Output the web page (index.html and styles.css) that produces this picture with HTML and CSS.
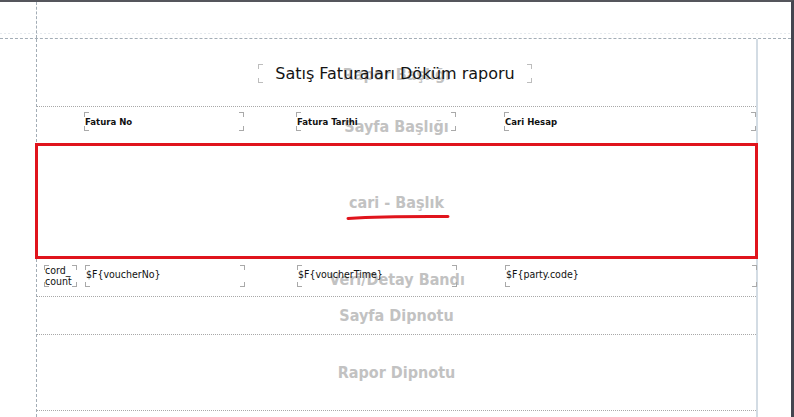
FILE: index.html
```html
<!DOCTYPE html>
<html lang="tr">
<head>
    <meta charset="UTF-8">
    <title>Rapor Tasarımı</title>
    <link rel="stylesheet" href="styles.css">
</head>
<body>
    <div class="sheet">
        <div class="top-margin">
            <div class="gutter"></div>
            <div class="top-rest"></div>
        </div>
        <div class="sheet-body">
            <div class="gutter"></div>
            <div class="page">
                <div class="band title-band">
                    <div class="ghost">Rapor Başlığı</div>
                    <div class="row">
                        <div class="field title-field">Satış Faturaları Döküm raporu</div>
                    </div>
                </div>
                <div class="band head-band">
                    <div class="ghost">Sayfa Başlığı</div>
                    <div class="row cols">
                        <div class="field col-a">Fatura No</div>
                        <div class="field col-b">Fatura Tarihi</div>
                        <div class="field col-c">Cari Hesap</div>
                    </div>
                </div>
                <div class="band group-band">
                    <div class="ghost">
                        <span class="marked">cari - Başlık
                            <svg class="scribble" width="104" height="8" viewBox="0 0 104 8">
                                <path d="M2 5.5 Q 40 3.2 102 3.6" fill="none" stroke="#e0141c" stroke-width="3" stroke-linecap="round"/>
                            </svg>
                        </span>
                    </div>
                </div>
                <div class="band detail-band">
                    <div class="ghost">Veri/Detay Bandı</div>
                    <div class="row details">
                        <div class="field rec">cord_<br>count</div>
                        <div class="field col-a">$F{voucherNo}</div>
                        <div class="field col-b">$F{voucherTime}</div>
                        <div class="field col-c">$F{party.code}</div>
                    </div>
                </div>
                <div class="band foot-band">
                    <div class="ghost">Sayfa Dipnotu</div>
                </div>
                <div class="band summary-band">
                    <div class="ghost">Rapor Dipnotu</div>
                </div>
            </div>
        </div>
    </div>
</body>
</html>
```

FILE: styles.css
```css
body {
    margin: 0;
    background: #ffffff;
    font-family: "DejaVu Sans", Verdana, sans-serif;
}
.sheet {
    width: 791px;
    height: 415px;
    border-top: 2px solid #55565c;
    border-right: 3px solid #44454f;
    overflow: hidden;
}
.top-margin {
    display: flex;
    height: 36px;
    border-bottom: 1px dashed #a3adb6;
    background: linear-gradient(90deg, #e6eaee 50%, transparent 50%) left 31px / 4px 1px repeat-x;
}
.gutter {
    width: 36px;
    flex: none;
}
.top-rest {
    flex: 1;
    border-left: 1px dashed #a3adb6;
}
.sheet-body {
    display: flex;
    height: 378px;
}
.page {
    width: 719px;
    border-left: 1px dashed #a3adb6;
    border-right: 2px solid #d3dce4;
}

/* bands */
.band {
    display: grid;
    border-bottom: 1px dotted #a8a8a8;
}
.band > * {
    grid-area: 1 / 1;
}
.ghost {
    align-self: center;
    justify-self: center;
    font-family: "DejaVu Sans Condensed", "DejaVu Sans", sans-serif;
    font-weight: bold;
    font-size: 16px;
    color: #c2c2c2;
}
.row {
    display: flex;
    align-self: start;
}
.title-band {
    height: 67px;
}
.title-band .ghost {
    margin-top: 4px;
}
.head-band {
    height: 36px;
    border-bottom: none;
}
.head-band .ghost {
    margin-top: 2px;
}
.group-band {
    height: 110px;
    margin: 0 -2px;
    border: 3px solid #e0141c;
}
.group-band .ghost {
    margin-top: 2px;
}
.detail-band {
    height: 37px;
}
.detail-band .ghost {
    margin-top: 3px;
}
.foot-band {
    height: 37px;
}
.summary-band {
    height: 75px;
}

/* elements with corner marks */
.field {
    --c: #a9a9a9;
    box-sizing: border-box;
    background:
        linear-gradient(var(--c), var(--c)) left top / 5px 1px no-repeat,
        linear-gradient(var(--c), var(--c)) left top / 1px 5px no-repeat,
        linear-gradient(var(--c), var(--c)) right top / 5px 1px no-repeat,
        linear-gradient(var(--c), var(--c)) right top / 1px 5px no-repeat,
        linear-gradient(var(--c), var(--c)) left bottom / 5px 1px no-repeat,
        linear-gradient(var(--c), var(--c)) left bottom / 1px 5px no-repeat,
        linear-gradient(var(--c), var(--c)) right bottom / 5px 1px no-repeat,
        linear-gradient(var(--c), var(--c)) right bottom / 1px 5px no-repeat;
}
.title-field {
    --c: #bdbdbd;
    width: 274px;
    height: 19px;
    margin: 25px 0 0 221px;
    font-size: 16px;
    line-height: 19px;
    text-align: center;
    color: #141414;
}
.cols .field {
    height: 19px;
    margin-top: 5px;
    padding: 4px 0 0 1px;
    font-family: "DejaVu Sans Condensed", "DejaVu Sans", sans-serif;
    font-weight: bold;
    font-size: 9.5px;
    color: #111111;
}
.col-a {
    width: 160px;
    margin-left: 47px;
}
.col-b {
    width: 160px;
    margin-left: 52px;
}
.col-c {
    width: 252px;
    margin-left: 48px;
}
.details .field {
    height: 22px;
    margin-top: 6px;
    padding: 3px 0 0 1px;
    font-family: "DejaVu Sans Condensed", "DejaVu Sans", sans-serif;
    font-size: 10.5px;
    line-height: 13px;
    color: #111111;
}
.details .rec {
    width: 33px;
    margin-left: 7px;
    padding: 0 0 0 1px;
    line-height: 11px;
    font-size: 10.5px;
}
.details .col-a {
    margin-left: 8px;
}

/* red marker under the group label */
.marked {
    position: relative;
}
.scribble {
    position: absolute;
    left: -3px;
    bottom: -9px;
}
```
